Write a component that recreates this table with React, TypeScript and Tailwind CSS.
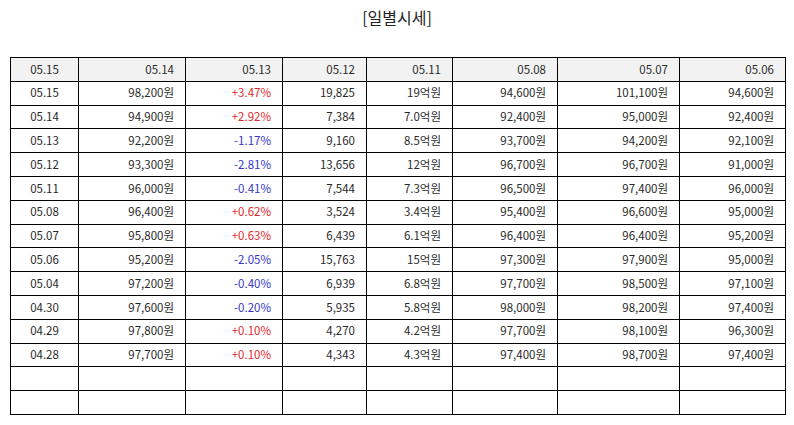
const header = ["05.15", "05.14", "05.13", "05.12", "05.11", "05.08", "05.07", "05.06"];

type Row = [string, string, string, string, string, string, string, string];

const rows: Row[] = [
  ["05.15", "98,200원", "+3.47%", "19,825", "19억원", "94,600원", "101,100원", "94,600원"],
  ["05.14", "94,900원", "+2.92%", "7,384", "7.0억원", "92,400원", "95,000원", "92,400원"],
  ["05.13", "92,200원", "-1.17%", "9,160", "8.5억원", "93,700원", "94,200원", "92,100원"],
  ["05.12", "93,300원", "-2.81%", "13,656", "12억원", "96,700원", "96,700원", "91,000원"],
  ["05.11", "96,000원", "-0.41%", "7,544", "7.3억원", "96,500원", "97,400원", "96,000원"],
  ["05.08", "96,400원", "+0.62%", "3,524", "3.4억원", "95,400원", "96,600원", "95,000원"],
  ["05.07", "95,800원", "+0.63%", "6,439", "6.1억원", "96,400원", "96,400원", "95,200원"],
  ["05.06", "95,200원", "-2.05%", "15,763", "15억원", "97,300원", "97,900원", "95,000원"],
  ["05.04", "97,200원", "-0.40%", "6,939", "6.8억원", "97,700원", "98,500원", "97,100원"],
  ["04.30", "97,600원", "-0.20%", "5,935", "5.8억원", "98,000원", "98,200원", "97,400원"],
  ["04.29", "97,800원", "+0.10%", "4,270", "4.2억원", "97,700원", "98,100원", "96,300원"],
  ["04.28", "97,700원", "+0.10%", "4,343", "4.3억원", "97,400원", "98,700원", "97,400원"],
];

const widths = ["w-[68px]", "w-[107px]", "w-[97px]", "w-[84px]", "w-[86px]", "w-[105px]", "w-[122px]", "w-[106px]"];

function Cell({ value, col }: { value: string; col: number }) {
  const color =
    col === 2 ? (value.startsWith("+") ? "text-[#e0282d]" : value.startsWith("-") ? "text-[#3535c8]" : "") : "";
  return (
    <td
      className={`h-[23.8px] border border-black p-0 leading-none ${
        col === 0 ? "text-center" : "pr-[11px] text-right"
      } ${color}`}
    >
      {value}
    </td>
  );
}

export default function App() {
  return (
    <div
      className="h-[425px] w-[794px] bg-white text-[11.5px] text-[#2a2a2a]"
      style={{ fontFamily: '"Noto Sans CJK KR", "Noto Sans", sans-serif' }}
    >
      <h1 className="pt-[5px] text-center text-[16px] leading-[24px] font-normal text-[#222]">[일별시세]</h1>
      <div className="px-[10px] pt-[28px]">
        <table className="w-[775px] table-fixed border-collapse">
          <colgroup>
            {widths.map((w, i) => (
              <col key={i} className={w} />
            ))}
          </colgroup>
          <thead>
            <tr className="bg-[#f2f2f2]">
              {header.map((h, i) => (
                <Cell key={i} value={h} col={i === 2 ? -1 : i} />
              ))}
            </tr>
          </thead>
          <tbody>
            {rows.map((r, ri) => (
              <tr key={ri}>
                {r.map((v, ci) => (
                  <Cell key={ci} value={v} col={ci} />
                ))}
              </tr>
            ))}
            {[0, 1].map((k) => (
              <tr key={`e${k}`}>
                {header.map((_, ci) => (
                  <Cell key={ci} value="" col={ci} />
                ))}
              </tr>
            ))}
          </tbody>
        </table>
      </div>
    </div>
  );
}
